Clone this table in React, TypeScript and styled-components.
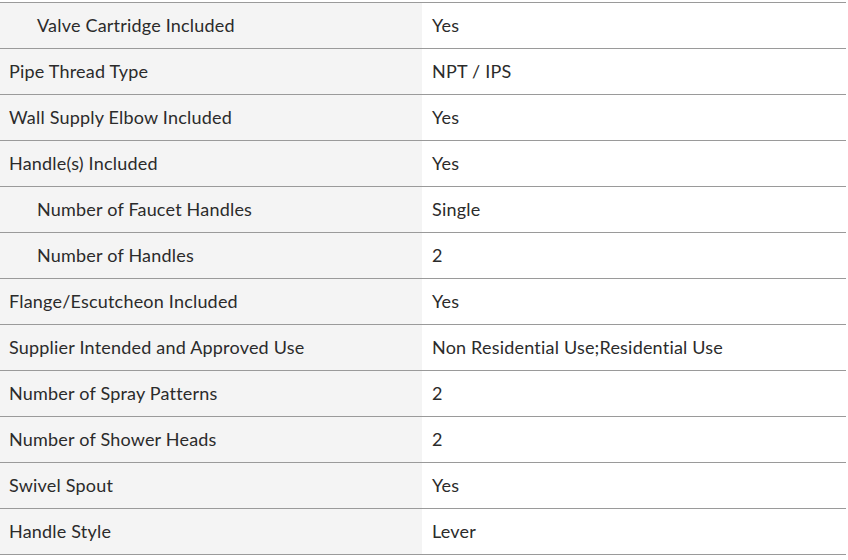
import React from "react";
import styled, { createGlobalStyle } from "styled-components";

const Global = createGlobalStyle`
  html, body { margin: 0; padding: 0; background: #ffffff; }
  body { font-family: Lato, "Open Sans", sans-serif; }
`;

const Table = styled.div`
  width: 846px;
  margin-top: 2px;
  border-bottom: 1px solid #9a9a9a;
  display: grid;
  grid-template-columns: 422px 424px;
`;

const Row = styled.div`
  display: contents;
`;

const Cell = styled.div<{ $label?: boolean; $indent?: boolean }>`
  box-sizing: border-box;
  height: 46px;
  border-top: 1px solid #9a9a9a;
  background: ${(p) => (p.$label ? "#f4f4f4" : "#ffffff")};
  display: flex;
  align-items: center;
  padding-bottom: 2px;
  padding-left: ${(p) => (p.$label ? (p.$indent ? "37px" : "9px") : "10px")};
  font-size: 18px;
  letter-spacing: 0.2px;
  color: #2b2b2b;
  white-space: nowrap;
`;

const rows: [string, string, boolean][] = [
  ["Valve Cartridge Included", "Yes", true],
  ["Pipe Thread Type", "NPT / IPS", false],
  ["Wall Supply Elbow Included", "Yes", false],
  ["Handle(s) Included", "Yes", false],
  ["Number of Faucet Handles", "Single", true],
  ["Number of Handles", "2", true],
  ["Flange/Escutcheon Included", "Yes", false],
  ["Supplier Intended and Approved Use", "Non Residential Use;Residential Use", false],
  ["Number of Spray Patterns", "2", false],
  ["Number of Shower Heads", "2", false],
  ["Swivel Spout", "Yes", false],
  ["Handle Style", "Lever", false],
];

export default function App() {
  return (
    <>
      <Global />
      <Table>
        {rows.map(([k, v, ind]) => (
          <Row key={k}>
            <Cell $label $indent={ind}>{k}</Cell>
            <Cell>{v}</Cell>
          </Row>
        ))}
      </Table>
    </>
  );
}
